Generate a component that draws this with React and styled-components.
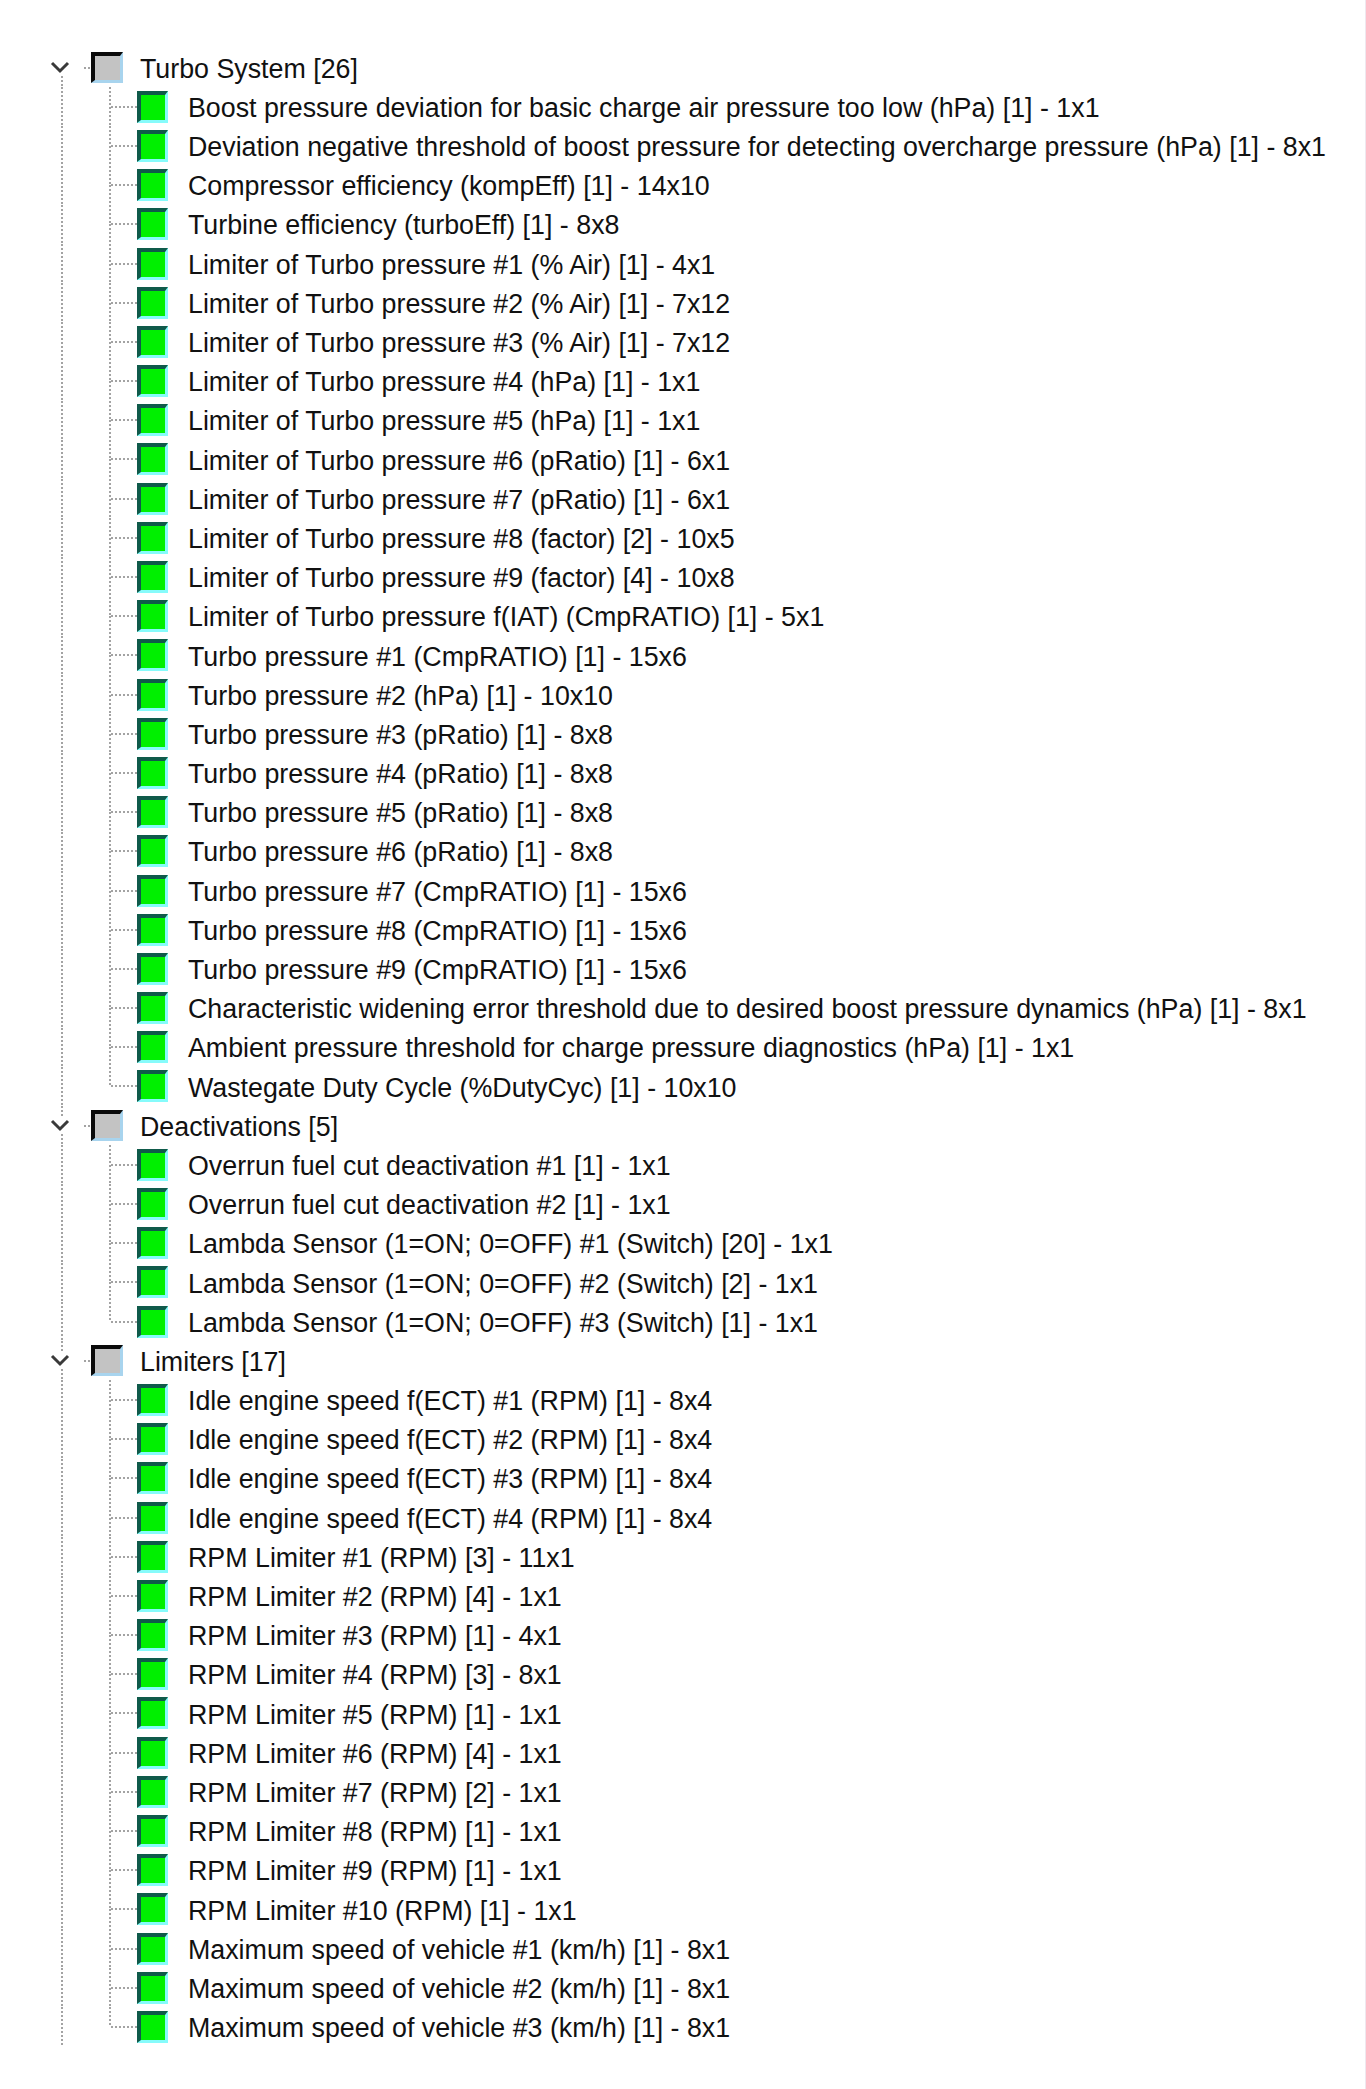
import React from 'react';
import styled, { createGlobalStyle } from 'styled-components';

const GlobalStyle = createGlobalStyle`
  html, body {
    margin: 0;
    padding: 0;
    background: #ffffff;
  }
  body {
    font-family: "Liberation Sans", Arial, sans-serif;
  }
`;

const ROW = 39.2;

const groups = [
  {
    title: 'Turbo System [26]',
    items: [
      'Boost pressure deviation for basic charge air pressure too low (hPa) [1] - 1x1',
      'Deviation negative threshold of boost pressure for detecting overcharge pressure (hPa) [1] - 8x1',
      'Compressor efficiency (kompEff) [1] - 14x10',
      'Turbine efficiency (turboEff) [1] - 8x8',
      'Limiter of Turbo pressure #1 (% Air) [1] - 4x1',
      'Limiter of Turbo pressure #2 (% Air) [1] - 7x12',
      'Limiter of Turbo pressure #3 (% Air) [1] - 7x12',
      'Limiter of Turbo pressure #4 (hPa) [1] - 1x1',
      'Limiter of Turbo pressure #5 (hPa) [1] - 1x1',
      'Limiter of Turbo pressure #6 (pRatio) [1] - 6x1',
      'Limiter of Turbo pressure #7 (pRatio) [1] - 6x1',
      'Limiter of Turbo pressure #8 (factor) [2] - 10x5',
      'Limiter of Turbo pressure #9 (factor) [4] - 10x8',
      'Limiter of Turbo pressure f(IAT) (CmpRATIO) [1] - 5x1',
      'Turbo pressure #1 (CmpRATIO) [1] - 15x6',
      'Turbo pressure #2 (hPa) [1] - 10x10',
      'Turbo pressure #3 (pRatio) [1] - 8x8',
      'Turbo pressure #4 (pRatio) [1] - 8x8',
      'Turbo pressure #5 (pRatio) [1] - 8x8',
      'Turbo pressure #6 (pRatio) [1] - 8x8',
      'Turbo pressure #7 (CmpRATIO) [1] - 15x6',
      'Turbo pressure #8 (CmpRATIO) [1] - 15x6',
      'Turbo pressure #9 (CmpRATIO) [1] - 15x6',
      'Characteristic widening error threshold due to desired boost pressure dynamics (hPa) [1] - 8x1',
      'Ambient pressure threshold for charge pressure diagnostics (hPa) [1] - 1x1',
      'Wastegate Duty Cycle (%DutyCyc) [1] - 10x10',
    ],
  },
  {
    title: 'Deactivations [5]',
    items: [
      'Overrun fuel cut deactivation #1 [1] - 1x1',
      'Overrun fuel cut deactivation #2 [1] - 1x1',
      'Lambda Sensor (1=ON; 0=OFF) #1 (Switch) [20] - 1x1',
      'Lambda Sensor (1=ON; 0=OFF) #2 (Switch) [2] - 1x1',
      'Lambda Sensor (1=ON; 0=OFF) #3 (Switch) [1] - 1x1',
    ],
  },
  {
    title: 'Limiters [17]',
    items: [
      'Idle engine speed f(ECT) #1 (RPM) [1] - 8x4',
      'Idle engine speed f(ECT) #2 (RPM) [1] - 8x4',
      'Idle engine speed f(ECT) #3 (RPM) [1] - 8x4',
      'Idle engine speed f(ECT) #4 (RPM) [1] - 8x4',
      'RPM Limiter #1 (RPM) [3] - 11x1',
      'RPM Limiter #2 (RPM) [4] - 1x1',
      'RPM Limiter #3 (RPM) [1] - 4x1',
      'RPM Limiter #4 (RPM) [3] - 8x1',
      'RPM Limiter #5 (RPM) [1] - 1x1',
      'RPM Limiter #6 (RPM) [4] - 1x1',
      'RPM Limiter #7 (RPM) [2] - 1x1',
      'RPM Limiter #8 (RPM) [1] - 1x1',
      'RPM Limiter #9 (RPM) [1] - 1x1',
      'RPM Limiter #10 (RPM) [1] - 1x1',
      'Maximum speed of vehicle #1 (km/h) [1] - 8x1',
      'Maximum speed of vehicle #2 (km/h) [1] - 8x1',
      'Maximum speed of vehicle #3 (km/h) [1] - 8x1',
    ],
  },
];

const Frame = styled.div`
  box-sizing: border-box;
  width: 1366px;
  min-height: 2089px;
  padding: 48px 0 0 40px;
  border-right: 1px solid #efe8ef;
`;

const Row = styled.div`
  display: flex;
  align-items: stretch;
  height: ${ROW}px;
`;

const Guide = styled.div`
  width: 44px;
  display: flex;
  flex-direction: column;
  align-items: center;
`;

const VDots = styled.div`
  width: 2px;
  flex: 1;
  background-image: linear-gradient(to bottom, #a3a3a3 50%, transparent 50%);
  background-size: 2px 4px;
  background-repeat: repeat-y;
  visibility: ${(p) => (p.$hidden ? 'hidden' : 'visible')};
`;

const HDots = styled.div`
  height: 2px;
  width: ${(p) => p.$w}px;
  align-self: center;
  background-image: linear-gradient(to right, #a3a3a3 50%, transparent 50%);
  background-size: 4px 2px;
  background-repeat: repeat-x;
`;

const Chevron = styled.svg`
  display: block;
  width: 24px;
  height: 16px;
  margin-left: -4px;
  flex: none;
`;

const Branch = styled.div`
  display: flex;
  margin-left: 25px;
`;

const BranchStem = styled.div`
  display: flex;
  flex-direction: column;
  width: 2px;
`;

const Box = styled.div`
  box-sizing: border-box;
  flex: none;
  align-self: center;
  width: ${(p) => (p.$group ? 32 : 31)}px;
  height: ${(p) => (p.$group ? 31 : 32)}px;
  background: ${(p) => (p.$group ? '#c3c3c3' : '#00f000')};
  border-style: solid;
  border-width: 4px 3px 3px 4px;
  border-color: ${(p) =>
    p.$group
      ? '#0a0a0a #a8d4ee #a8d4ee #0a0a0a'
      : '#0f5a4a #86fbfb #86fbfb #0f5a4a'};
`;

const Label = styled.span`
  align-self: center;
  margin-left: ${(p) => (p.$group ? 17 : 20)}px;
  margin-top: 3px;
  font-size: 26.8px;
  line-height: 1;
  color: #111;
  white-space: nowrap;
`;

function GroupHeader({ title, first }) {
  return (
    <Row>
      <Guide>
        <VDots $hidden={first} />
        <Chevron viewBox="0 0 24 16">
          <polyline
            points="4,3 12,11 20,3"
            fill="none"
            stroke="#3a3a3a"
            strokeWidth="3"
          />
        </Chevron>
        <VDots />
      </Guide>
      <HDots $w={7} />
      <Box $group />
      <Label $group>{title}</Label>
    </Row>
  );
}

function ItemRow({ text, last }) {
  return (
    <Row>
      <Guide>
        <VDots />
      </Guide>
      <Branch>
        <BranchStem>
          <VDots />
          <VDots $hidden={last} />
        </BranchStem>
        <HDots $w={26} />
      </Branch>
      <Box />
      <Label>{text}</Label>
    </Row>
  );
}

export default function App() {
  return (
    <>
      <GlobalStyle />
      <Frame>
        {groups.map((g, gi) => (
          <React.Fragment key={g.title}>
            <GroupHeader title={g.title} first={gi === 0} />
            {g.items.map((t, i) => (
              <ItemRow key={t} text={t} last={i === g.items.length - 1} />
            ))}
          </React.Fragment>
        ))}
      </Frame>
    </>
  );
}
